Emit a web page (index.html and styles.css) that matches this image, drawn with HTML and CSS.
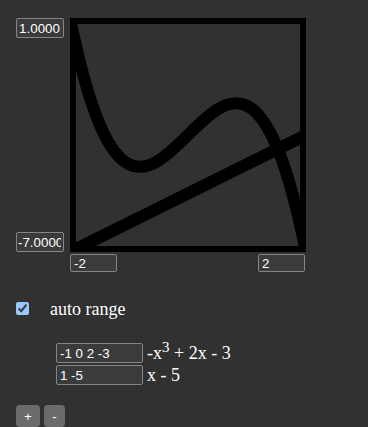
FILE: index.html
```html
<!DOCTYPE html>
<html>
<head>
<meta charset="utf-8">
<link rel="stylesheet" href="styles.css">
</head>
<body>
<div class="plot-row">
  <div class="yaxis">
    <input class="num yin" type="text" value="1.0000">
    <input class="num yin" type="text" value="-7.0000">
  </div>
  <svg class="plot" width="236" height="234" viewBox="0 0 236 234">
    <rect x="0" y="0" width="236" height="234" fill="none" stroke="#000" stroke-width="12"/>
    <path d="M0 0 C78.667 390 157.333 -156 236 234" fill="none" stroke="#000" stroke-width="12"/>
    <path d="M0 234 L236 117" fill="none" stroke="#000" stroke-width="12"/>
  </svg>
</div>
<div class="xaxis">
  <input class="num xin" type="text" value="-2">
  <input class="num xin" type="text" value="2">
</div>
<div class="auto">
  <input class="check" type="checkbox" checked>
  <span class="label">auto range</span>
</div>
<div class="polys">
  <div class="poly"><input class="num coef" type="text" value="-1 0 2 -3"><span class="expr">-x<sup>3</sup> + 2x - 3</span></div>
  <div class="poly"><input class="num coef" type="text" value="1 -5"><span class="expr">x - 5</span></div>
</div>
<div class="buttons">
  <button class="btn plus">+</button>
  <button class="btn minus">-</button>
</div>
</body>
</html>
```

FILE: styles.css
```css
:root { color-scheme: dark; }
html, body { background: #313131; }
body {
  margin: 0;
  padding: 18px 0 0 16px;
  color: #fff;
  font-family: "Liberation Serif", "Times New Roman", serif;
  font-size: 18px;
  overflow: hidden;
}
.plot-row { display: flex; align-items: flex-start; }
.yaxis {
  display: flex;
  flex-direction: column;
  justify-content: space-between;
  width: 48px;
  height: 234px;
}
.plot { display: block; margin-left: 6px; }
.num {
  box-sizing: border-box;
  margin: 0;
  background: #3b3b3b;
  border: 1px solid #858585;
  border-radius: 2px;
  color: #fff;
  font-family: "Liberation Sans", Arial, sans-serif;
  font-size: 13.333px;
  padding: 0 0 0 3px;
  outline: none;
}
.yin {
  width: 48px;
  height: 20px;
  padding: 0 2px 0 1px;
  text-align: center;
}
.xaxis {
  display: flex;
  justify-content: space-between;
  width: 235px;
  margin: 2px 0 0 54px;
}
.xin { width: 47px; height: 18px; }
.auto {
  display: flex;
  align-items: flex-start;
  margin-top: 27px;
  height: 20px;
}
.check { width: 13px; height: 13px; margin: 3px 0 0 0; }
.label { margin-left: 21px; line-height: 20px; }
.polys {
  display: flex;
  flex-direction: column;
  gap: 2px;
  margin: 24px 0 0 40px;
}
.poly { display: flex; align-items: center; gap: 4px; height: 20px; }
.coef { width: 87px; height: 20px; }
.expr { line-height: 20px; white-space: nowrap; }
.expr sup { font-size: 15px; line-height: 0; }
.buttons { display: flex; gap: 4px; margin-top: 20px; }
.btn {
  margin: 0;
  height: 22px;
  padding: 0;
  border: none;
  border-radius: 4px;
  background: #6b6b6b;
  color: #fff;
  font-family: "Liberation Sans", Arial, sans-serif;
  font-size: 13.333px;
}
.plus { width: 24px; }
.minus { width: 21px; }
```
